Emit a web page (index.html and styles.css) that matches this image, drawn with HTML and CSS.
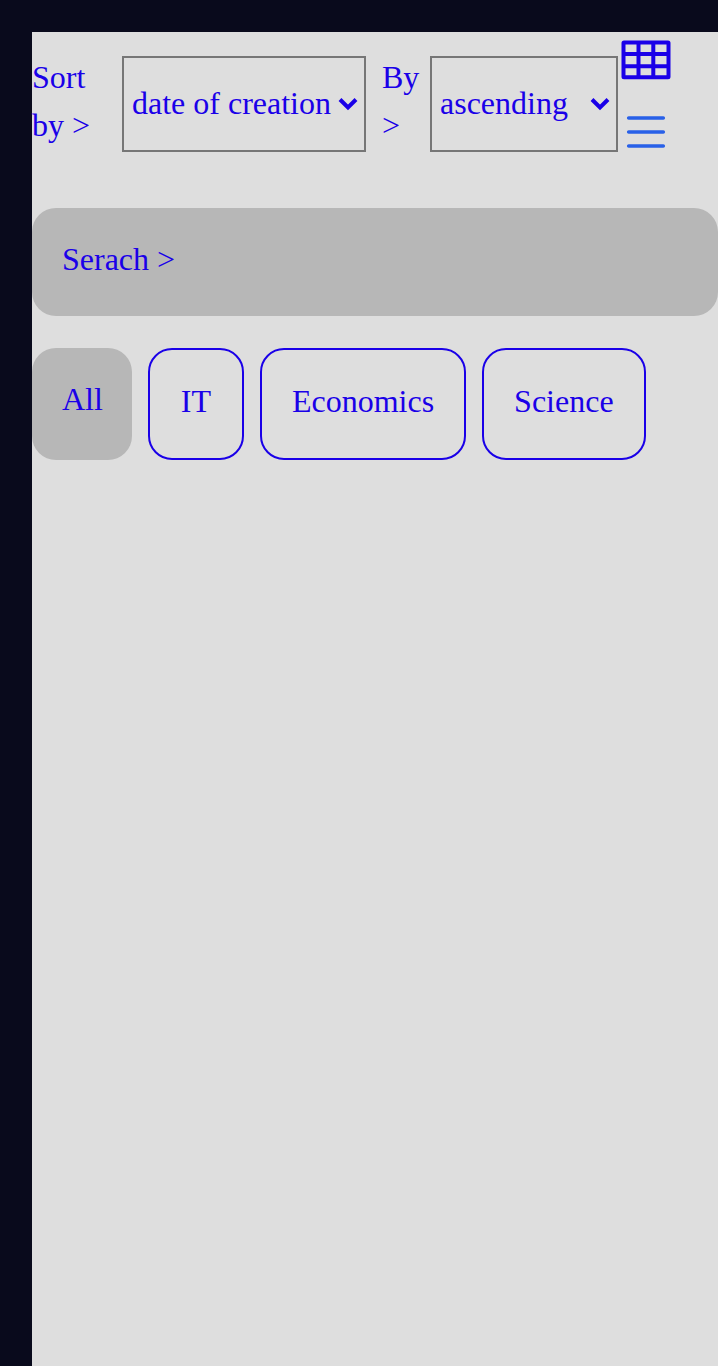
FILE: index.html
```html
<!DOCTYPE html>
<html lang="en">
<head>
  <meta charset="utf-8">
  <meta name="viewport" content="width=device-width, initial-scale=1">
  <title>Notes</title>
  <link rel="stylesheet" href="styles.css">
</head>
<body>
  <main class="panel">
    <div class="toolbar">
      <div class="sorting">
        <label class="sort-label" for="sort-field">Sort by &gt;</label>
        <div class="select-box field-box">
          <select class="select" id="sort-field">
            <option>date of creation</option>
            <option>name</option>
          </select>
          <svg class="chevron" viewBox="0 0 20 14" aria-hidden="true"><path d="M2 2.5 10 10.5 18 2.5"/></svg>
        </div>
        <label class="order-label" for="sort-order">By &gt;</label>
        <div class="select-box order-box">
          <select class="select" id="sort-order">
            <option>ascending</option>
            <option>descending</option>
          </select>
          <svg class="chevron" viewBox="0 0 20 14" aria-hidden="true"><path d="M2 2.5 10 10.5 18 2.5"/></svg>
        </div>
      </div>
      <div class="views">
        <button class="view" type="button" aria-label="Grid view">
          <svg class="view-icon grid-icon" viewBox="0 0 56 56" aria-hidden="true"><rect x="5.500" y="10.500" width="45" height="34.800" rx=".5"/><path d="M5.500 22H50.500M5.500 34.300H50.500M20.500 10.500V45.300M35.300 10.500V45.300"/></svg>
        </button>
        <button class="view" type="button" aria-label="List view">
          <svg class="view-icon list-icon" viewBox="0 0 56 56" aria-hidden="true"><path d="M10.700 14H45.300M10.700 28H45.300M10.700 42H45.300"/></svg>
        </button>
      </div>
    </div>
    <input class="search" type="search" placeholder="Serach &gt;" aria-label="Search">
    <div class="filters">
      <button class="filter filter-active" type="button">All</button>
      <button class="filter" type="button">IT</button>
      <button class="filter" type="button">Economics</button>
      <button class="filter" type="button">Science</button>
    </div>
  </main>
</body>
</html>
```
FILE: styles.css
```css
:root {
  --ink: #1a00e8;
  --page: #090a1c;
  --surface: #dedede;
  --fill: #b7b7b7;
}

* {
  box-sizing: border-box;
}

body {
  margin: 0;
  min-height: 100vh;
  display: flex;
  padding: 32px 0 0 32px;
  background: var(--page);
  color: var(--ink);
  font: 32px/48px "Liberation Serif", "Times New Roman", serif;
}

button,
input,
select {
  margin: 0;
  color: inherit;
  font: inherit;
}

.panel {
  flex: 1;
  min-width: 0;
  background: var(--surface);
}

.toolbar {
  display: flex;
  align-items: flex-start;
  padding-bottom: 48px;
}

.sorting {
  display: flex;
  align-items: flex-end;
  padding-top: 21px;
}

.sort-label,
.order-label {
  padding-bottom: 3px;
}

.sort-label {
  width: 90px;
  padding-right: 16px;
}

.order-label {
  width: 48px;
  margin-left: 16px;
}

.select-box {
  position: relative;
}

.field-box {
  width: 244px;
}

.order-box {
  width: 188px;
}

.select {
  appearance: none;
  display: block;
  width: 100%;
  height: 96px;
  padding: 0 32px 2px 8px;
  border: 2px solid #767676;
  border-radius: 0;
  background: transparent;
}

.chevron {
  position: absolute;
  top: 41px;
  right: 8px;
  width: 20px;
  height: 14px;
  fill: none;
  stroke: var(--ink);
  stroke-width: 4;
  pointer-events: none;
}

.views {
  display: flex;
  flex-direction: column;
  gap: 16px;
}

.view {
  padding: 0;
  border: 0;
  background: none;
}

.view-icon {
  display: block;
  width: 56px;
  height: 56px;
  fill: none;
  stroke-width: 3.6;
}

.grid-icon {
  stroke: var(--ink);
  stroke-width: 4;
}

.list-icon {
  stroke: #2860e8;
  stroke-linecap: round;
}

.search {
  appearance: none;
  display: block;
  width: 100%;
  height: 108px;
  padding: 27px 30px 33px;
  border: 0;
  border-radius: 24px;
  background: var(--fill);
}

.search::placeholder {
  color: var(--ink);
  opacity: 1;
}

.filters {
  display: flex;
  flex-wrap: wrap;
  gap: 16px;
  padding-top: 32px;
}

.filter {
  min-width: 96px;
  padding: 27px 30px 33px;
  border: 2px solid var(--ink);
  border-radius: 24px;
  background: transparent;
}

.filter-active {
  padding: 27px 29px 37px 30px;
  border: 0;
  background: var(--fill);
}
```
